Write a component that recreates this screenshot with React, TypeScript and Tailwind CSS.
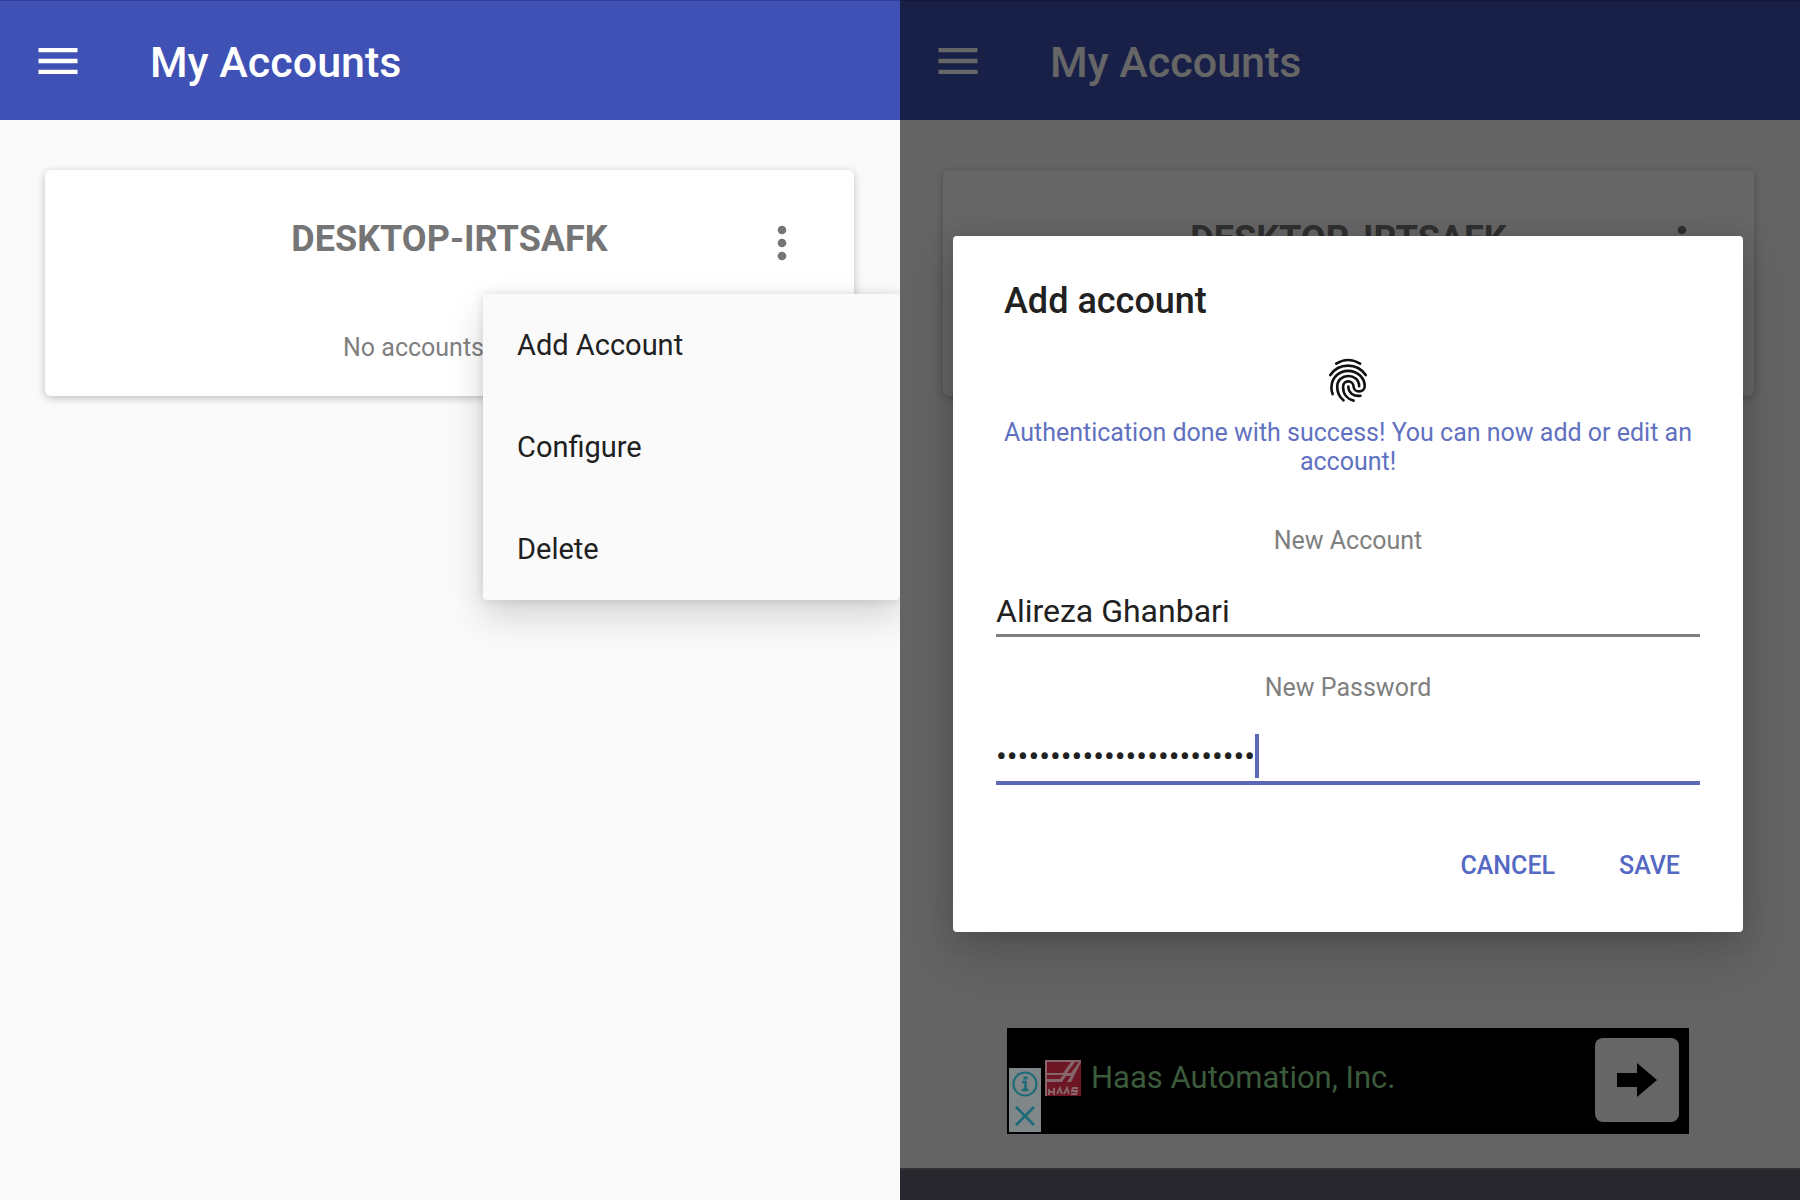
import { useState } from 'react'
import { MdMenu, MdMoreVert } from 'react-icons/md'

const menuItems = ['Add Account', 'Configure', 'Delete']

export default function App() {
  return (
    <div className="grid min-h-screen grid-cols-2 font-['Roboto',sans-serif]">
      <AccountsScreen />
      <AddAccountScreen />
    </div>
  )
}

function AccountsScreen() {
  return (
    <section className="relative flex flex-col overflow-hidden bg-[#fafafa]">
      <AppBar />
      <main className="pt-[50px] pr-[46px] pl-[45px]">
        <DeviceCard />
      </main>
      <ul className="absolute top-[294px] right-0 w-[417px] rounded-sm bg-[#fafafa] shadow-[0_16px_36px_rgba(0,0,0,0.16),0_0_10px_rgba(0,0,0,0.12)]">
        {menuItems.map(item => (
          <li key={item}>
            <button type="button" className="h-[102px] w-full px-[34px] pt-0.5 text-left text-[29px] text-[#212121]">
              {item}
            </button>
          </li>
        ))}
      </ul>
    </section>
  )
}

function AddAccountScreen() {
  return (
    <section className="relative flex flex-col overflow-hidden bg-[#fafafa]">
      <AppBar />
      <main className="pt-[50px] pr-[46px] pl-[43px]">
        <DeviceCard />
      </main>
      <div className="absolute inset-0 flex items-center bg-black/60 pr-[57px] pb-8 pl-[53px]">
        <AddAccountDialog />
      </div>
      <div className="relative mt-auto">
        <AdBanner />
        <div className="h-8 border-t-2 border-[#303034] bg-[#28272d]" />
      </div>
    </section>
  )
}

function AppBar() {
  return (
    <header className="flex h-[120px] items-center gap-[66px] border-t border-[#303f9f] bg-[#3f51b5] px-8 text-white">
      <button type="button" aria-label="Menu">
        <MdMenu size={52} />
      </button>
      <h1 className="pt-0.5 text-[43px] leading-[52px] font-medium">My Accounts</h1>
    </header>
  )
}

function DeviceCard() {
  return (
    <article className="rounded-md bg-white px-[46px] pt-[47px] pb-[33px] shadow-[0_2px_8px_rgba(0,0,0,0.24)]">
      <div className="grid grid-cols-[1fr_auto_1fr] items-start text-[#757575]">
        <h2 className="col-start-2 text-[36px] leading-[44px] font-bold">DESKTOP-IRTSAFK</h2>
        <button type="button" aria-label="More options" className="justify-self-end">
          <MdMoreVert size={52} />
        </button>
      </div>
      <p className="mt-16 pr-[72px] text-center text-[25px] leading-[30px] text-[#808080]">No accounts</p>
    </article>
  )
}

function AddAccountDialog() {
  const [account, setAccount] = useState('Alireza Ghanbari')
  const [password, setPassword] = useState('correcthorsebatterystapl')

  return (
    <form
      role="dialog"
      aria-labelledby="dialog-title"
      className="flex w-full flex-col rounded bg-white px-[43px] pt-11 pb-[42px] text-[25px] shadow-[0_24px_56px_rgba(0,0,0,0.16),0_4px_24px_rgba(0,0,0,0.12)]"
    >
      <h2 id="dialog-title" className="px-2 text-[36px] leading-[42px] font-medium text-[#212121]">
        Add account
      </h2>
      <Fingerprint />
      <p className="mt-4 text-center leading-[29px] text-[#5f71c0]">
        Authentication done with success! You can now add or edit an account!
      </p>

      <label htmlFor="account" className="mt-[50px] text-center leading-[30px] text-[#808080]">
        New Account
      </label>
      <input
        id="account"
        value={account}
        onChange={e => setAccount(e.target.value)}
        className="mt-8 h-[49px] border-b-3 border-[#808080] text-[32px] text-[#212121] outline-none"
      />

      <label htmlFor="password" className="mt-9 text-center leading-[30px] text-[#808080]">
        New Password
      </label>
      <div className="mt-7 flex h-[54px] items-center border-b-4 border-[#5b67b8]">
        <input
          id="password"
          type="password"
          value={password}
          onChange={e => setPassword(e.target.value)}
          className="field-sizing-content text-[32px] text-[#212121] outline-none"
        />
        <span className="h-11 w-1 bg-[#5b67b8]" />
      </div>

      <div className="mt-[57px] flex justify-end gap-8 pr-1 font-medium text-[#5468c4]">
        <button type="button" className="h-12 px-4">CANCEL</button>
        <button type="button" className="h-12 px-4">SAVE</button>
      </div>
    </form>
  )
}

function Fingerprint() {
  return (
    <svg
      viewBox="88 50 116 134"
      className="mx-auto mt-9 h-11 w-[38px]"
      fill="none"
      stroke="#111"
      strokeWidth="8"
      strokeLinecap="round"
    >
      <path d="M110 67Q146 45 183 67" />
      <path d="M92 102C104 84 122 73 146 73S188 84 200 102" />
      <path d="M99 160C95 150 95 142 96 134C98 108 120 89 146 89C174 89 197 110 197 136C197 156 164 158 163 137C162 116 131 116 131 138C131 162 146 176 163 180" />
      <path d="M132 179C120 168 113 153 113 138C113 94 180 94 180 136" />
      <path d="M147 137C147 157 164 168 184 165" />
    </svg>
  )
}

function AdBanner() {
  return (
    <aside className="mr-[111px] mb-[34px] ml-[107px] flex h-[106px] items-center bg-black pr-[10px] pl-0.5">
      <div className="mb-0.5 flex h-16 w-8 flex-col self-end bg-[#7f8789] text-[#1b6a78]">
        <button type="button" aria-label="Ad information" className="flex h-8 items-center justify-center">
          <svg viewBox="0 0 26 26" className="size-[26px]" fill="none" stroke="currentColor">
            <circle cx="13" cy="13" r="11.5" strokeWidth="2" />
            <path d="M10 11h3.5v7.5M9.5 19h7" strokeWidth="2.5" />
            <path d="M11.5 5.5h4v3h-4z" fill="currentColor" stroke="none" />
          </svg>
        </button>
        <button type="button" aria-label="Close ad" className="flex h-8 items-center justify-center">
          <svg viewBox="0 0 20 20" className="size-5" fill="none" stroke="currentColor" strokeWidth="2.5">
            <path d="M1 1l18 18M19 1L1 19" />
          </svg>
        </button>
      </div>
      <a href="#haas" className="mb-1.5 ml-1 flex items-center gap-[10px] text-[31px] leading-9 text-[#3c5a3c]">
        <HaasLogo />
        Haas Automation, Inc.
      </a>
      <button
        type="button"
        aria-label="Open ad"
        className="mb-0.5 ml-auto flex size-[84px] items-center justify-center rounded-lg bg-[#666666]"
      >
        <svg viewBox="0 0 40 34" className="h-[34px] w-10">
          <path d="M0 10h20V0l20 17-20 17V24H0z" fill="#000" />
        </svg>
      </button>
    </aside>
  )
}

function HaasLogo() {
  return (
    <svg viewBox="0 0 36 36" className="size-9">
      <rect width="36" height="36" fill="#85656a" />
      <rect x="2" y="2" width="34" height="34" fill="#6e1624" />
      <path d="M1 13h17l8-11h4l-8 11h4l8-11h2L26 22h-4l4-6h-5l-4 6H1v-3h14l3-4H1z" fill="#85656a" />
      <path
        d="M4 29v6M4 32h5M9 28v7M12 34l3-6 2 6M19 34l3-6 2 6M33 28h-5l-1 3h5l-1 3h-5"
        fill="none"
        stroke="#85656a"
        strokeWidth="2"
      />
    </svg>
  )
}
